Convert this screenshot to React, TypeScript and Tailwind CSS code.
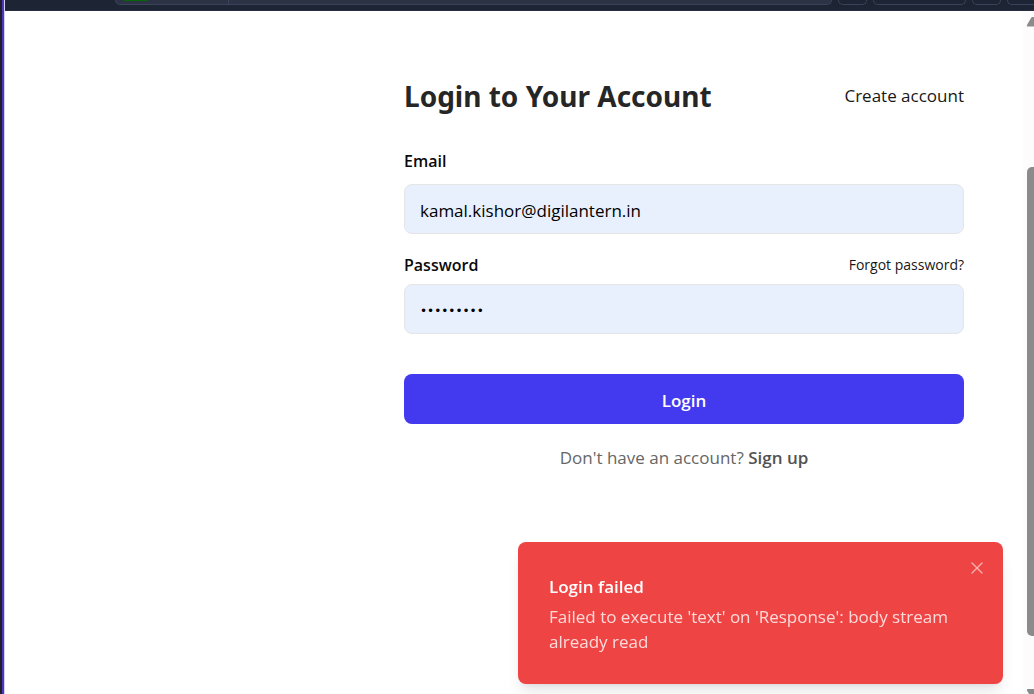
import { X } from "lucide-react";

const inputBase =
  "block h-[50px] w-full rounded-lg border border-[#e5e5e5] bg-[#e8f0fe] px-[15px] pt-[3px] text-black outline-none";

function BrowserBar() {
  return (
    <div className="flex h-[11px] shrink-0 items-start gap-[6px] overflow-hidden border-b border-[#2a2b45] bg-[#1d2433] pl-[110px]">
      <div className="flex h-[5px] min-w-0 flex-1 rounded-b-lg border border-t-0 border-[#3b435c] bg-[#2c3344] pl-[8px]">
        <div className="h-px w-[24px] rounded-b bg-[#056608]" />
        <div className="ml-[80px] h-full w-px bg-[#3b435c]" />
      </div>
      <div className="h-[5px] w-[29px] shrink-0 rounded-b-lg border border-t-0 border-[#39425c]" />
      <div className="h-[5px] w-[93px] shrink-0 rounded-b-lg border border-t-0 border-[#39425c]" />
      <div className="h-[5px] w-[29px] shrink-0 rounded-b-lg border border-t-0 border-[#39425c]" />
      <div className="h-[5px] w-[27px] shrink-0 rounded-bl-lg border border-t-0 border-r-0 border-[#39425c]" />
    </div>
  );
}

function ScrollRail() {
  return (
    <div aria-hidden="true" className="flex w-[11px] shrink-0 flex-col items-end overflow-hidden bg-[#fcfcfc] pt-[6px]">
      <svg className="h-[10px] w-[8px] shrink-0" viewBox="0 0 8 10">
        <path d="M8 0H6.5Q5.6 0 5 1L1 8Q.2 9.6 1.6 9.6H8Z" fill="#8b8b8b" />
      </svg>
      <div className="h-[140px] shrink-0" />
      <div className="min-h-0 w-[7px] flex-1 rounded-l-[5px] bg-[#8b8b8b]" />
      <div className="h-[53px] shrink-0" />
      <svg className="h-[5px] w-[8px] shrink-0" viewBox="0 0 8 5">
        <path d="M8 0H1.8Q.4 0 1 1.6L3 5H8Z" fill="#8b8b8b" />
      </svg>
    </div>
  );
}

function LoginForm() {
  return (
    <form className="w-full max-w-[560px] pt-[65px]" onSubmit={(e) => e.preventDefault()}>
      <div className="flex items-center justify-between">
        <h1 className="font-['Noto_Sans',sans-serif] text-[28px] leading-10 font-bold text-[#262626]">
          Login to Your Account
        </h1>
        <a href="#create" className="text-[17px] leading-6 text-[#171717]">
          Create account
        </a>
      </div>

      <label htmlFor="email" className="mt-[33px] block text-[16px] leading-6 font-semibold text-[#0a0a0a]">
        Email
      </label>
      <input
        id="email"
        type="email"
        defaultValue="kamal.kishor@digilantern.in"
        className={`${inputBase} mt-[11px] text-[17px]`}
      />

      <div className="mt-[19px] flex items-center justify-between">
        <label htmlFor="password" className="text-[16px] leading-6 font-semibold text-[#0a0a0a]">
          Password
        </label>
        <a href="#forgot" className="text-[14px] leading-6 text-[#171717]">
          Forgot password?
        </a>
      </div>
      <input
        id="password"
        type="password"
        defaultValue="kamal1234"
        className={`${inputBase} mt-[7px] font-['DejaVu_Sans',sans-serif] text-[12px]`}
      />

      <button type="submit" className="mt-10 h-[50px] w-full rounded-lg bg-[#4339ee] pt-[3px] text-[17px] font-semibold text-white">
        Login
      </button>

      <p className="mt-[22px] text-center text-[17px] leading-6 text-[#666666]">
        Don't have an account?{" "}
        <a href="#signup" className="font-semibold text-[#525252]">
          Sign up
        </a>
      </p>
    </form>
  );
}

function Toast() {
  return (
    <div
      role="alert"
      className="fixed right-[31px] bottom-[10px] w-[485px] max-w-[90%] rounded-lg bg-[#ef4444] px-[31px] pt-[33px] pb-[30px] shadow-lg"
    >
      <p className="text-[17px] leading-6 font-semibold text-white">Login failed</p>
      <p className="mt-[5px] text-[17px] leading-[25px] text-[#fddada]">
        Failed to execute 'text' on 'Response': body stream already read
      </p>
      <button type="button" aria-label="Close" className="absolute top-4 right-4 text-[#f9b4b4]">
        <X className="size-5" strokeWidth={1.5} />
      </button>
    </div>
  );
}

export default function App() {
  return (
    <div className="flex h-screen overflow-hidden bg-white font-['Open_Sans','Noto_Sans',sans-serif]">
      <div className="w-[5px] shrink-0 border-r border-[#d5d0f0] bg-linear-to-r from-[#1b1f2b] from-60% to-[#5035b8] to-60%" />
      <div className="flex min-w-0 flex-1 flex-col">
        <BrowserBar />
        <div className="flex min-h-0 flex-1">
          <main className="flex min-w-0 flex-1 justify-end pr-[59px] pl-6">
            <LoginForm />
          </main>
          <ScrollRail />
        </div>
      </div>
      <Toast />
    </div>
  );
}
